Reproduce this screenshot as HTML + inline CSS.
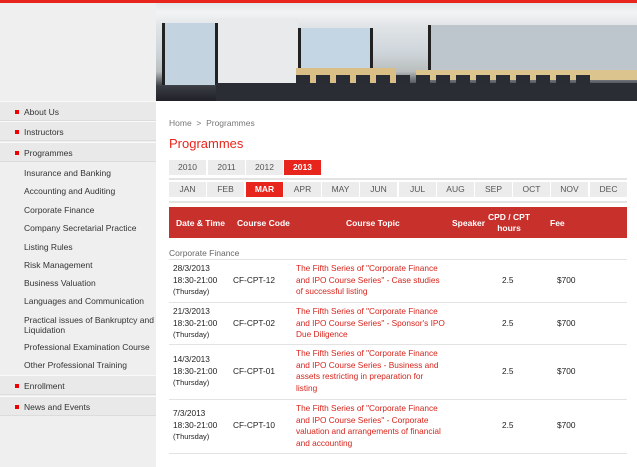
<!DOCTYPE html>
<html><head><style>
*{margin:0;padding:0;box-sizing:border-box}
body{width:637px;height:467px;overflow:hidden;background:#fff;font-family:"Liberation Sans",sans-serif;position:relative}
.top{position:absolute;left:0;top:0;width:637px;height:3px;background:#e8251c}
.side{position:absolute;left:0;top:3px;width:156px;height:464px;background:#efefef}
.img{position:absolute;left:156px;top:3px;width:481px;height:98px;overflow:hidden;background:linear-gradient(180deg,#e4e7ea 0%,#f2f3f4 10%,#dfe3e6 25%,#cfd6db 50%,#b9bdbd 70%,#3a3c44 85%,#1f2028 100%)}
.a{position:absolute;font-size:8.5px;color:#333;white-space:nowrap}
.m{position:absolute;left:0;width:156px;height:20px;background:#e9e9e9;border-top:1px solid #fafafa;border-bottom:1px solid #dcdcdc}
.m span{position:absolute;left:24px;top:5px;font-size:8.5px;color:#333}
.m i{position:absolute;left:15px;top:8px;width:4px;height:4px;background:#e00}
.tab{position:absolute;height:15px;background:#ececec;font-size:8.5px;color:#555;text-align:center;line-height:15px}
.tab.on{background:#e8251c;color:#fff;font-weight:bold}
.hl{position:absolute;left:169px;width:458px;height:1px;background:#e3e3e3}
.th{position:absolute;color:#fff;font-weight:bold;font-size:8.5px;text-align:center;white-space:nowrap}
.t{position:absolute;font-size:8.3px;color:#222;line-height:11.5px;white-space:nowrap}
.r{color:#d8231b}
</style></head><body>
<div class="top"></div>
<div class="side"></div>
<div class="img">
 <div style="position:absolute;left:6px;top:20px;width:56px;height:62px;background:#c3d3e0;border-left:3px solid #222;border-right:3px solid #222"></div>
 <div style="position:absolute;left:62px;top:15px;width:80px;height:70px;background:#e8eaec"></div>
 <div style="position:absolute;left:142px;top:25px;width:75px;height:48px;background:#c4d6e4;border-left:3px solid #222;border-right:3px solid #222"></div>
 <div style="position:absolute;left:272px;top:22px;width:209px;height:50px;background:#bcc6cc;border-left:3px solid #222"></div>
 <div style="position:absolute;left:140px;top:65px;width:100px;height:20px;background:#d9bf86"></div>
 <div style="position:absolute;left:260px;top:67px;width:221px;height:10px;background:#dcc48e"></div>
 <div style="position:absolute;left:60px;top:80px;width:421px;height:18px;background:#2b2d35"></div>
 <div style="position:absolute;left:140px;top:72px;width:300px;height:10px;background:repeating-linear-gradient(90deg,#2a2c34 0 14px,transparent 14px 20px)"></div>
</div>
<div class="m" style="top:101px"><i></i><span>About Us</span></div>
<div class="m" style="top:121px"><i></i><span>Instructors</span></div>
<div class="m" style="top:142px"><i></i><span>Programmes</span></div>
<div class="a" style="left:24px;top:168px">Insurance and Banking</div>
<div class="a" style="left:24px;top:186px">Accounting and Auditing</div>
<div class="a" style="left:24px;top:205px">Corporate Finance</div>
<div class="a" style="left:24px;top:223px">Company Secretarial Practice</div>
<div class="a" style="left:24px;top:242px">Listing Rules</div>
<div class="a" style="left:24px;top:260px">Risk Management</div>
<div class="a" style="left:24px;top:278px">Business Valuation</div>
<div class="a" style="left:24px;top:296px">Languages and Communication</div>
<div class="a" style="left:24px;top:315px;line-height:10px">Practical issues of Bankruptcy and<br>Liquidation</div>
<div class="a" style="left:24px;top:342px">Professional Examination Course</div>
<div class="a" style="left:24px;top:360px">Other Professional Training</div>
<div class="m" style="top:375px"><i></i><span>Enrollment</span></div>
<div class="m" style="top:396px"><i></i><span>News and Events</span></div>

<div class="a" style="left:169px;top:118px;color:#777">Home &nbsp;&gt;&nbsp; Programmes</div>
<div class="a" style="left:169px;top:136px;color:#e8251c;font-size:13px">Programmes</div>
<div class="tab" style="left:169px;top:160px;width:37px">2010</div>
<div class="tab" style="left:208px;top:160px;width:37px">2011</div>
<div class="tab" style="left:246px;top:160px;width:37px">2012</div>
<div class="tab on" style="left:284px;top:160px;width:37px">2013</div>
<div class="hl" style="top:178px;height:2px"></div>
<div class="tab" style="left:169px;top:182px;width:37px">JAN</div>
<div class="tab" style="left:207px;top:182px;width:37px">FEB</div>
<div class="tab on" style="left:246px;top:182px;width:37px">MAR</div>
<div class="tab" style="left:284px;top:182px;width:37px">APR</div>
<div class="tab" style="left:322px;top:182px;width:37px">MAY</div>
<div class="tab" style="left:360px;top:182px;width:37px">JUN</div>
<div class="tab" style="left:399px;top:182px;width:37px">JUL</div>
<div class="tab" style="left:437px;top:182px;width:37px">AUG</div>
<div class="tab" style="left:475px;top:182px;width:37px">SEP</div>
<div class="tab" style="left:513px;top:182px;width:37px">OCT</div>
<div class="tab" style="left:551px;top:182px;width:37px">NOV</div>
<div class="tab" style="left:590px;top:182px;width:37px">DEC</div>
<div class="hl" style="top:201px;height:2px"></div>
<div style="position:absolute;left:169px;top:207px;width:458px;height:31px;background:#c8302c"></div>
<div class="th" style="left:176px;top:218px">Date &amp; Time</div>
<div class="th" style="left:237px;top:218px">Course Code</div>
<div class="th" style="left:346px;top:218px">Course Topic</div>
<div class="th" style="left:452px;top:218px">Speaker</div>
<div class="th" style="left:484px;top:212px;width:50px;line-height:11px">CPD / CPT<br>hours</div>
<div class="th" style="left:550px;top:218px">Fee</div>
<div class="a" style="left:169px;top:248px;color:#666">Corporate Finance</div>
<div class="hl" style="top:259px"></div>

<div class="t" style="left:173px;top:263px">28/3/2013<br>18:30-21:00<br><span style="font-size:7.5px">(Thursday)</span></div>
<div class="t" style="left:233px;top:275px">CF-CPT-12</div>
<div class="t r" style="left:296px;top:263px">The Fifth Series of "Corporate Finance<br>and IPO Course Series" - Case studies<br>of successful listing</div>
<div class="t" style="left:502px;top:275px">2.5</div>
<div class="t" style="left:557px;top:275px">$700</div>
<div class="hl" style="top:302px"></div>

<div class="t" style="left:173px;top:306px">21/3/2013<br>18:30-21:00<br><span style="font-size:7.5px">(Thursday)</span></div>
<div class="t" style="left:233px;top:318px">CF-CPT-02</div>
<div class="t r" style="left:296px;top:306px">The Fifth Series of "Corporate Finance<br>and IPO Course Series" - Sponsor's IPO<br>Due Diligence</div>
<div class="t" style="left:502px;top:318px">2.5</div>
<div class="t" style="left:557px;top:318px">$700</div>
<div class="hl" style="top:344px"></div>

<div class="t" style="left:173px;top:354px">14/3/2013<br>18:30-21:00<br><span style="font-size:7.5px">(Thursday)</span></div>
<div class="t" style="left:233px;top:366px">CF-CPT-01</div>
<div class="t r" style="left:296px;top:348px">The Fifth Series of "Corporate Finance<br>and IPO Course Series - Business and<br>assets restricting in preparation for<br>listing</div>
<div class="t" style="left:502px;top:366px">2.5</div>
<div class="t" style="left:557px;top:366px">$700</div>
<div class="hl" style="top:399px"></div>

<div class="t" style="left:173px;top:408px">7/3/2013<br>18:30-21:00<br><span style="font-size:7.5px">(Thursday)</span></div>
<div class="t" style="left:233px;top:420px">CF-CPT-10</div>
<div class="t r" style="left:296px;top:403px">The Fifth Series of "Corporate Finance<br>and IPO Course Series" - Corporate<br>valuation and arrangements of financial<br>and accounting</div>
<div class="t" style="left:502px;top:420px">2.5</div>
<div class="t" style="left:557px;top:420px">$700</div>
<div class="hl" style="top:453px"></div>
</body></html>
